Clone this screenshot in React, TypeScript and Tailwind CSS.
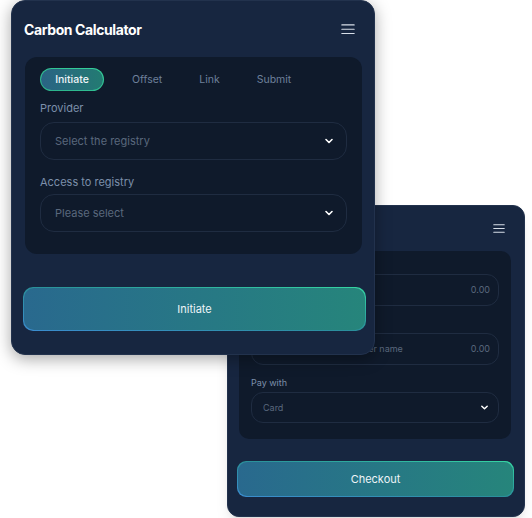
import React from 'react'

const font = { fontFamily: 'Inter, "Noto Sans", sans-serif' }

const Burger = ({ w }: { w: number }) => (
  <svg width={w} height={w * 0.75} viewBox="0 0 16 12" fill="none">
    <path d="M1 1h14M1 6h14M1 11h14" stroke="#d7dee8" strokeWidth="1.4" strokeLinecap="round" />
  </svg>
)

const Chevron = ({ size = 10 }: { size?: number }) => (
  <svg width={size} height={size} viewBox="0 0 10 10" fill="none">
    <path d="M2 3.5 5 6.5 8 3.5" stroke="#ffffff" strokeWidth="1.6" strokeLinecap="round" strokeLinejoin="round" />
  </svg>
)

// gradient button with a gradient hairline border
const GradientButton = ({ label, className }: { label: string; className: string }) => (
  <div className={`p-px bg-gradient-to-tr from-[#3b8cd0] via-[#2a8f9a] to-[#36d6a2] ${className}`}>
    <div className="w-full h-full rounded-[inherit] bg-gradient-to-r from-[#29698e] to-[#26857b] flex items-center justify-center">
      <span className="text-[11px] font-normal text-[#eef4f8]">{label}</span>
    </div>
  </div>
)

const BackCard: React.FC = () => (
  <div className="absolute left-[227px] top-[205px] w-[298px] h-[312px] rounded-[12px] bg-[#172640] border border-[#22324d] shadow-lg">
    <div className="h-[45px] flex items-center justify-between pl-3 pr-[19px]">
      <span className="text-[13px] font-bold text-white">Checkout</span>
      <Burger w={12} />
    </div>
    <div className="ml-[11px] w-[272px] h-[188px] rounded-[10px] bg-[#0f1a2b] px-3 pt-[8px]">
      <div className="text-[9px] text-[#7c8faa] h-[15px] leading-[15px]">Amount</div>
      <div className="h-[32px] rounded-[12px] border border-[#1f2c41] flex items-center justify-end px-[8px]">
        <span className="text-[9px] text-[#5a687d]">0.00</span>
      </div>
      <div className="text-[9px] text-[#7c8faa] h-[27px] leading-[27px]">Name</div>
      <div className="h-[32px] rounded-[12px] border border-[#1f2c41] flex items-center justify-between pl-[12px] pr-[8px]">
        <span className="text-[9px] text-[#5a687d]">Enter full certificate holder name</span>
        <span className="text-[9px] text-[#5a687d]">0.00</span>
      </div>
      <div className="text-[9px] text-[#7c8faa] h-[27px] pt-[12px] leading-[12px]">Pay with</div>
      <div className="h-[31px] rounded-[12px] border border-[#1f2c41] flex items-center justify-between pl-[11px] pr-[9px]">
        <span className="text-[9px] text-[#5a687d]">Card</span>
        <Chevron size={9} />
      </div>
    </div>
    <GradientButton label="Checkout" className="ml-[9px] mt-[22px] w-[277px] h-[36px] rounded-[9px]" />
  </div>
)

const Select = ({ placeholder }: { placeholder: string }) => (
  <div className="h-[38px] rounded-[14px] border border-[#1f2c41] flex items-center justify-between pl-[14px] pr-[12px]">
    <span className="text-[11px] text-[#5a687d]">{placeholder}</span>
    <Chevron />
  </div>
)

const FrontCard: React.FC = () => (
  <div className="absolute left-[11px] top-0 w-[364px] h-[355px] rounded-[14px] bg-[#172640] border border-[#22324d] shadow-[0_4px_16px_rgba(0,0,0,0.35)]">
    <div className="h-[56px] flex items-center justify-between pl-3 pr-[19px]">
      <span className="text-[14px] font-bold tracking-[-0.4px] text-white">Carbon Calculator</span>
      <Burger w={14} />
    </div>
    <div className="ml-[13px] w-[337px] h-[197px] rounded-[12px] bg-[#0f1a2b] pl-[15px] pr-[15px] pt-[11px]">
      <div className="flex items-center text-[10.5px] text-[#6e809b]">
        <div className="p-px rounded-full bg-gradient-to-tr from-[#2bb08a] to-[#36d39c]">
          <div className="w-[62px] h-[21px] rounded-full bg-gradient-to-r from-[#2a6384] to-[#237b72] flex items-center justify-center text-[#eef4f8] font-medium">
            Initiate
          </div>
        </div>
        <span className="ml-[28px]">Offset</span>
        <span className="ml-[37px]">Link</span>
        <span className="ml-[37px]">Submit</span>
      </div>
      <div className="mt-[9px] h-[16px] leading-[16px] text-[11px] text-[#7c8faa]">Provider</div>
      <div className="mt-[6px]">
        <Select placeholder="Select the registry" />
      </div>
      <div className="mt-[14px] h-[16px] leading-[16px] text-[11px] text-[#7c8faa]">Access to registry</div>
      <div className="mt-[4px]">
        <Select placeholder="Please select" />
      </div>
    </div>
    <GradientButton label="Initiate" className="ml-[11px] mt-[33px] w-[343px] h-[44px] rounded-[10px]" />
  </div>
)

export default function App() {
  return (
    <div className="relative w-[532px] h-[518px] bg-white overflow-hidden" style={font}>
      <BackCard />
      <FrontCard />
    </div>
  )
}
